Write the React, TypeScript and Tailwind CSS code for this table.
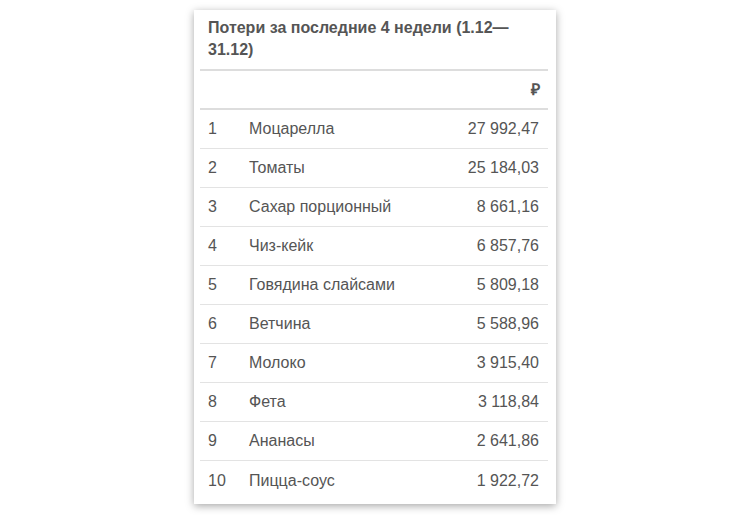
import React from 'react';

const rows: [string, string][] = [
  ['Моцарелла', '27 992,47'],
  ['Томаты', '25 184,03'],
  ['Сахар порционный', '8 661,16'],
  ['Чиз-кейк', '6 857,76'],
  ['Говядина слайсами', '5 809,18'],
  ['Ветчина', '5 588,96'],
  ['Молоко', '3 915,40'],
  ['Фета', '3 118,84'],
  ['Ананасы', '2 641,86'],
  ['Пицца-соус', '1 922,72'],
];

const App: React.FC = () => {
  return (
    <div className="min-h-[515px] w-[750px] bg-white pt-[10px] font-['Liberation_Sans',Arial,sans-serif] text-[#555]">
      <div className="mx-auto w-[362px] bg-white pb-[4px] pl-[6px] pr-[8px] shadow-[0_2px_8px_rgba(0,0,0,0.35)]">
        <div className="border-b-2 border-[#dddddd] px-2 pt-[7px] pb-[8px] text-[16px] font-bold leading-[22px]">
          Потери за последние 4 недели (1.12—31.12)
        </div>
        <div className="flex h-[39px] items-center justify-end border-b-2 border-[#dddddd] px-2 text-[16px] font-bold">
          ₽
        </div>
        {rows.map(([name, value], i) => (
          <div
            key={name}
            className={
              'flex h-[39px] items-center text-[16px] ' +
              (i < rows.length - 1 ? 'border-b border-[#e3e3e3]' : '')
            }
          >
            <span className="w-[41px] pl-2">{i + 1}</span>
            <span className="flex-1 pl-2">{name}</span>
            <span className="pr-[9px] text-right">{value}</span>
          </div>
        ))}
      </div>
    </div>
  );
};

export default App;
